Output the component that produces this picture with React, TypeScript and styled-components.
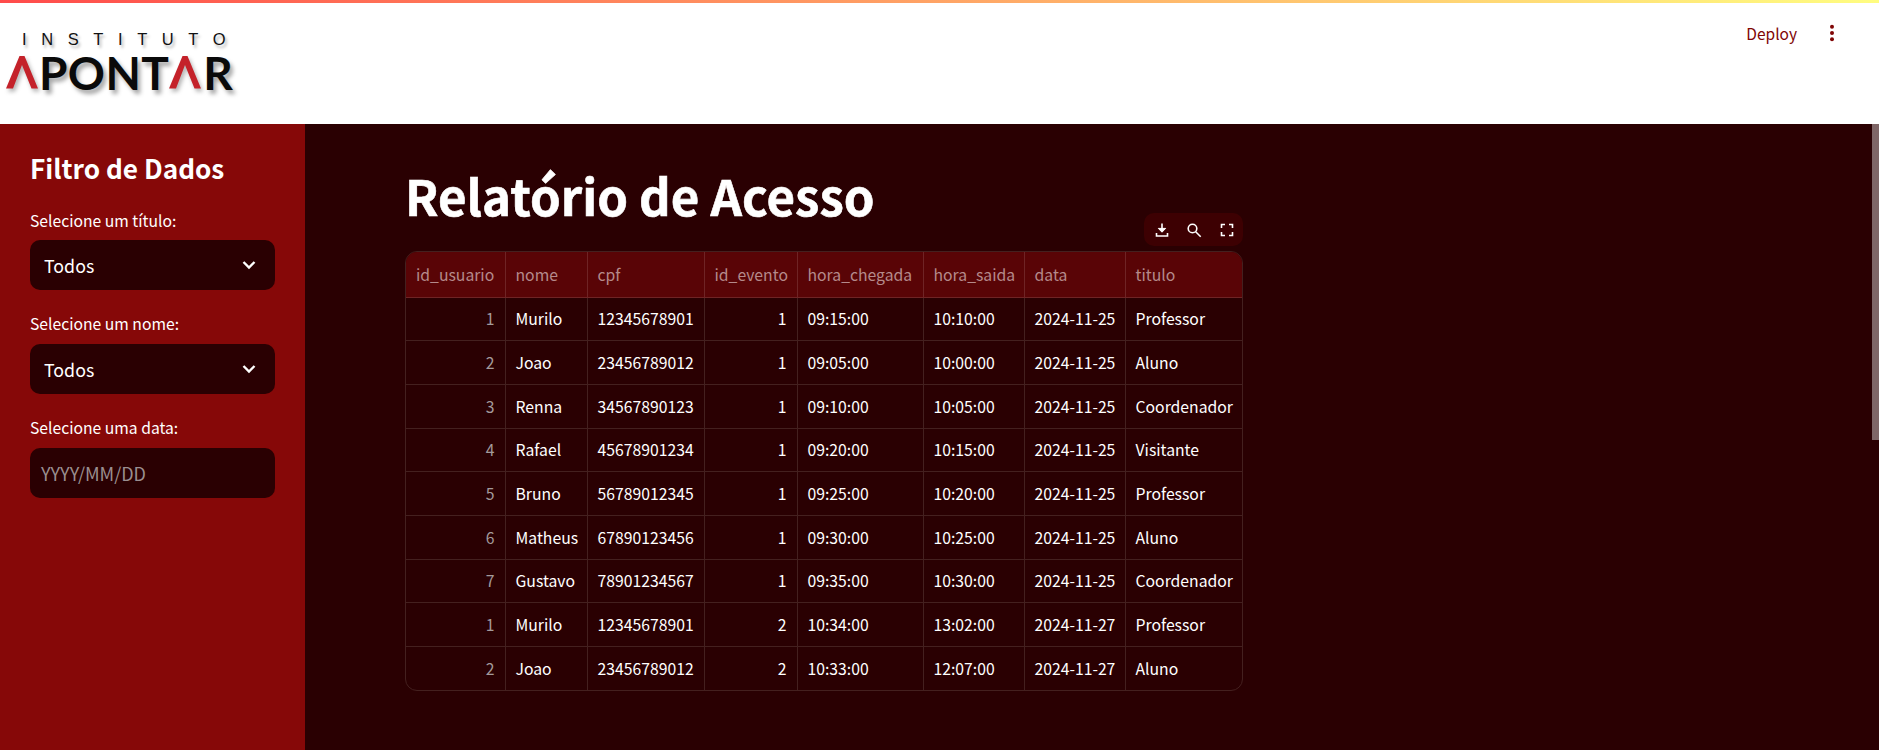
import * as React from 'react'
import styled, { createGlobalStyle } from 'styled-components'

const Global = createGlobalStyle`
    html, body {
        margin: 0;
        padding: 0;
        height: 100%;
        overflow: hidden;
        background: #2a0002;
        font-family: "Noto Sans CJK SC", "Noto Sans", sans-serif;
    }
    * { box-sizing: border-box; }
`

const Page = styled.div`
    width: 1879px;
    height: 750px;
    display: flex;
    flex-direction: column;
    overflow: hidden;
`
const Header = styled.header`
    height: 124px;
    flex: none;
    background: #fff;
    display: flex;
    justify-content: space-between;
    align-items: flex-start;
    border-top: 3px solid transparent;
    border-image: linear-gradient(90deg, #ff4b4b, #fffd80) 1;
    border-width: 3px 0 0 0;
`
const Logo = styled.div`
    display: flex;
    flex-direction: column;
    padding: 27px 0 0 6px;
    width: 250px;
`
const LogoTop = styled.div`
    font-family: "Liberation Sans", sans-serif;
    font-size: 16.5px;
    line-height: 18px;
    letter-spacing: 14.6px;
    padding-left: 16px;
    color: #111;
    text-shadow: 2px 3px 3px rgba(0, 0, 0, 0.3);
    white-space: nowrap;
`
const LogoMain = styled.div`
    display: flex;
    align-items: center;
    height: 33px;
    margin-top: 8px;
`
const LogoWord = styled.span<{ $gap?: number }>`
    font-family: Lato, "Liberation Sans", sans-serif;
    font-weight: 700;
    font-size: 46px;
    line-height: 33px;
    letter-spacing: 0.4px;
    margin-left: ${p => p.$gap || 0}px;
    color: #0a0a0a;
    text-shadow: 3px 4px 4px rgba(0, 0, 0, 0.35);
`
const Chevron = styled.svg`
    width: 32px;
    height: 33px;
    flex: none;
    filter: drop-shadow(2px 3px 2px rgba(0, 0, 0, 0.3));
`
const Actions = styled.div`
    display: flex;
    align-items: center;
    gap: 30px;
    padding: 0 42px 0 0;
    height: 60px;
`
const Deploy = styled.span`
    font-size: 15.5px;
    line-height: 24px;
    color: #800606;
`
const Dots = styled.svg`
    width: 10px;
    height: 20px;
    display: block;
`
const Body = styled.div`
    flex: 1;
    display: flex;
    min-height: 0;
    position: relative;
`
const Sidebar = styled.aside`
    width: 305px;
    flex: none;
    background: #860808;
    padding: 26px 30px 0;
    color: #fff;
`
const SideTitle = styled.h2`
    margin: 0 0 22.5px;
    font-size: 26.2px;
    line-height: 36px;
    font-weight: 600;
    color: #fff;
`
const Field = styled.div`
    margin-bottom: 22.3px;
`
const Label = styled.div`
    font-size: 15.7px;
    line-height: 24px;
    height: 24px;
    margin-bottom: 7.5px;
    color: #fff;
`
const Select = styled.div`
    height: 50px;
    border-radius: 10px;
    background: #2a0002;
    color: #fff;
    font-size: 17.8px;
    padding: 0 16px 0 14px;
    display: flex;
    align-items: center;
    justify-content: space-between;
`
const DateInput = styled(Select)`
    padding-left: 11px;
    font-size: 18px;
    color: #9a8f90;
`
const Main = styled.main`
    flex: 1;
    padding: 36px 0 0 100px;
    min-width: 0;
`
const Title = styled.h1`
    margin: 0;
    font-size: 49.2px;
    line-height: 70px;
    font-weight: 700;
    color: #fff;
    -webkit-text-stroke: 0.6px #fff;
`
const ToolbarRow = styled.div`
    display: flex;
    justify-content: flex-end;
    width: 838px;
    margin-top: -17px;
    height: 33px;
`
const Toolbar = styled.div`
    width: 99px;
    height: 33px;
    border-radius: 10px;
    background: #3d0002;
    display: flex;
    align-items: center;
    justify-content: space-around;
    padding: 0 0 0 2px;
`
const ToolIcon = styled.svg`
    width: 16px;
    height: 16px;
    display: block;
`
const TableWrap = styled.div`
    width: 838px;
    margin-top: 5px;
    border: 1px solid #44201f;
    border-radius: 12px;
    overflow: hidden;
`
const Table = styled.table`
    width: 100%;
    border-collapse: collapse;
    table-layout: fixed;
    font-size: 15.75px;
`
const Th = styled.th`
    height: 45px;
    padding: 0 10px;
    background: #590406;
    color: #b58a8b;
    font-weight: 400;
    text-align: left;
    border-right: 1px solid #6f2425;
    border-bottom: 1px solid #6f2425;
    white-space: nowrap;
    &:last-child { border-right: none; }
`
const Td = styled.td<{ $num?: boolean; $muted?: boolean }>`
    height: 43.7px;
    padding: 0 10px;
    color: ${p => (p.$muted ? '#a39a9b' : '#fff')};
    text-align: ${p => (p.$num ? 'right' : 'left')};
    border-right: 1px solid #44201f;
    border-bottom: 1px solid #44201f;
    white-space: nowrap;
    &:last-child { border-right: none; }
    tr:last-child & { border-bottom: none; }
`
const Scrollbar = styled.div`
    position: absolute;
    top: 0;
    right: 0;
    width: 7px;
    height: 316px;
    background: #7f6667;
`

const widths = [99, 82, 117, 93, 126, 101, 101, 117]
const columns = ['id_usuario', 'nome', 'cpf', 'id_evento', 'hora_chegada', 'hora_saida', 'data', 'titulo']
const rows = [
    [1, 'Murilo', '12345678901', 1, '09:15:00', '10:10:00', '2024-11-25', 'Professor'],
    [2, 'Joao', '23456789012', 1, '09:05:00', '10:00:00', '2024-11-25', 'Aluno'],
    [3, 'Renna', '34567890123', 1, '09:10:00', '10:05:00', '2024-11-25', 'Coordenador'],
    [4, 'Rafael', '45678901234', 1, '09:20:00', '10:15:00', '2024-11-25', 'Visitante'],
    [5, 'Bruno', '56789012345', 1, '09:25:00', '10:20:00', '2024-11-25', 'Professor'],
    [6, 'Matheus', '67890123456', 1, '09:30:00', '10:25:00', '2024-11-25', 'Aluno'],
    [7, 'Gustavo', '78901234567', 1, '09:35:00', '10:30:00', '2024-11-25', 'Coordenador'],
    [1, 'Murilo', '12345678901', 2, '10:34:00', '13:02:00', '2024-11-27', 'Professor'],
    [2, 'Joao', '23456789012', 2, '10:33:00', '12:07:00', '2024-11-27', 'Aluno'],
]

const ChevronDown = () => (
    <svg width="20" height="20" viewBox="0 0 20 20" fill="none" stroke="#fff" strokeWidth="2.400">
        <path d="M4.500 7 10 12.500 15.500 7" />
    </svg>
)

const LogoChevron = () => (
    <Chevron viewBox="0 0 32 33">
        <path d="M0 32.500 13.500 0h5L32 32.500h-6.500L16 9 7 32.500z" fill="#c4222a" />
    </Chevron>
)

export default function App() {
    return (
        <Page>
            <Global />
            <Header>
                <Logo>
                    <LogoTop>INSTITUTO</LogoTop>
                    <LogoMain>
                        <LogoChevron />
                        <LogoWord $gap={1}>PONT</LogoWord>
                        <LogoChevron />
                        <LogoWord $gap={2}>R</LogoWord>
                    </LogoMain>
                </Logo>
                <Actions>
                    <Deploy>Deploy</Deploy>
                    <Dots viewBox="0 0 10 20">
                        <circle cx="5" cy="3.700" r="2" fill="#800606" />
                        <circle cx="5" cy="10" r="2" fill="#800606" />
                        <circle cx="5" cy="16.300" r="2" fill="#800606" />
                    </Dots>
                </Actions>
            </Header>
            <Body>
                <Sidebar>
                    <SideTitle>Filtro de Dados</SideTitle>
                    <Field>
                        <Label>Selecione um título:</Label>
                        <Select>Todos<ChevronDown /></Select>
                    </Field>
                    <Field>
                        <Label>Selecione um nome:</Label>
                        <Select>Todos<ChevronDown /></Select>
                    </Field>
                    <Field>
                        <Label>Selecione uma data:</Label>
                        <DateInput>YYYY/MM/DD</DateInput>
                    </Field>
                </Sidebar>
                <Main>
                    <Title>Relatório de Acesso</Title>
                    <ToolbarRow>
                        <Toolbar>
                            <ToolIcon viewBox="0 0 16 16" fill="none" stroke="#fff" strokeWidth="1.600">
                                <path d="M8 1.500v8" />
                                <path d="M4.300 6.400h7.400L8 10.200z" fill="#fff" strokeWidth="1" />
                                <path d="M2.500 11v3h11v-3" />
                            </ToolIcon>
                            <ToolIcon viewBox="0 0 16 16" fill="none" stroke="#fff" strokeWidth="1.600">
                                <circle cx="6.500" cy="6.500" r="4.300" />
                                <path d="m9.700 9.700 5 5" />
                            </ToolIcon>
                            <ToolIcon viewBox="0 0 16 16" fill="none" stroke="#fff" strokeWidth="1.600">
                                <path d="M2.500 6V2.500H6M10 2.500h3.500V6M13.500 10v3.500H10M6 13.500H2.500V10" />
                            </ToolIcon>
                        </Toolbar>
                    </ToolbarRow>
                    <TableWrap>
                        <Table>
                            <colgroup>
                                {widths.map((w, i) => <col key={i} style={{ width: w }} />)}
                            </colgroup>
                            <thead>
                                <tr>{columns.map(c => <Th key={c}>{c}</Th>)}</tr>
                            </thead>
                            <tbody>
                                {rows.map((r, i) => (
                                    <tr key={i}>
                                        {r.map((v, j) => (
                                            <Td key={j} $num={j === 0 || j === 3} $muted={j === 0}>{v}</Td>
                                        ))}
                                    </tr>
                                ))}
                            </tbody>
                        </Table>
                    </TableWrap>
                </Main>
                <Scrollbar />
            </Body>
        </Page>
    )
}
